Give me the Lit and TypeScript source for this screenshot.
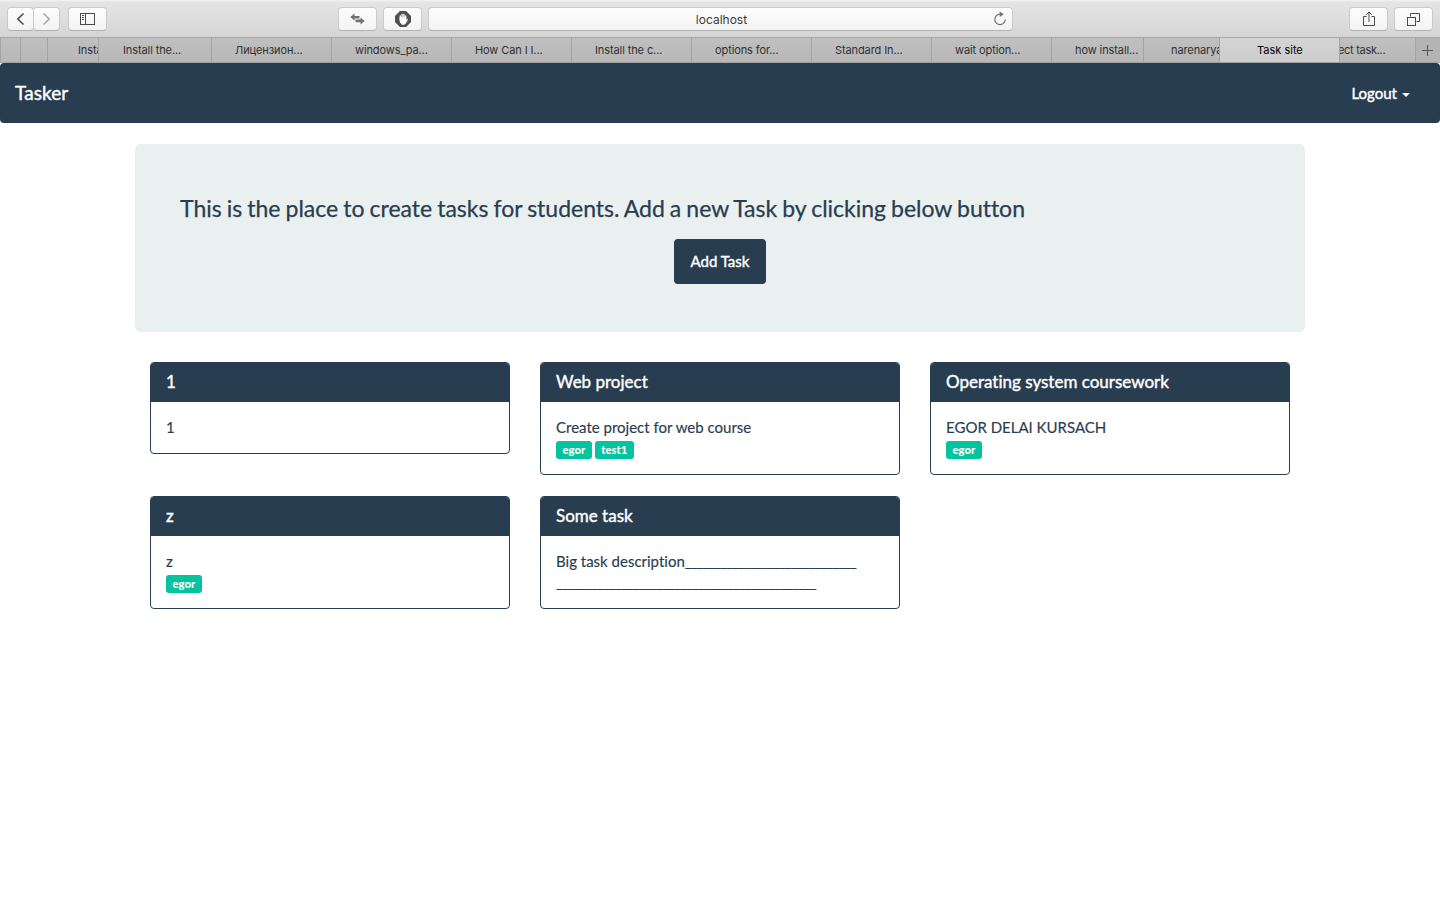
import { LitElement, html, css, svg, nothing } from "lit";
import { customElement } from "lit/decorators.js";
import { classMap } from "lit/directives/class-map.js";
import { styleMap } from "lit/directives/style-map.js";

interface Tab { w: number; pad: number; text: string; active?: boolean; }
interface Task { title: string; text: string; blanks?: number[]; users: string[]; }

const TABS: Tab[] = [
  { w: 21, pad: 0, text: "" },
  { w: 27, pad: 0, text: "" },
  { w: 51, pad: 30, text: "Insta" },
  { w: 113, pad: 24, text: "Install the..." },
  { w: 120, pad: 23, text: "Лицензион..." },
  { w: 120, pad: 23, text: "windows_pa..." },
  { w: 120, pad: 23, text: "How Can I I..." },
  { w: 120, pad: 23, text: "Install the c..." },
  { w: 120, pad: 23, text: "options for..." },
  { w: 120, pad: 23, text: "Standard In..." },
  { w: 120, pad: 23, text: "wait option..." },
  { w: 92, pad: 23, text: "how install..." },
  { w: 76, pad: 27, text: "narenarya" },
  { w: 120, pad: 37, text: "Task site", active: true },
  { w: 76, pad: 0, text: "ect task..." },
];

const TASKS: Task[] = [
  { title: "1", text: "1", users: [] },
  { title: "Web project", text: "Create project for web course", users: ["egor", "test1"] },
  { title: "Operating system coursework", text: "EGOR DELAI KURSACH", users: ["egor"] },
  { title: "z", text: "z", users: ["egor"] },
  { title: "Some task", text: "Big task description", blanks: [29, 44], users: [] },
];

@customElement("safari-chrome")
class SafariChrome extends LitElement {
  static styles = css`
    :host { display: block; font-family: Inter, "Liberation Sans", sans-serif; }
    .toolbar {
      box-sizing: border-box; height: 37px; padding: 7px 7px 0; display: flex;
      background: linear-gradient(#f4f4f4 0, #e5e5e5 2px, #d5d5d5 100%);
    }
    .btn, .address {
      box-sizing: border-box; height: 24px; border: 1px solid #cbcbcb; border-bottom-color: #b2b2b2;
      border-radius: 4px; background: linear-gradient(#fdfdfd, #f3f3f3);
      display: flex; align-items: center; justify-content: center; color: #4c4c4c;
    }
    .btn { width: 39px; }
    .nav { width: 27px; }
    .fwd { margin-left: -1px; color: #a9a9a9; }
    .side { margin-left: 8px; }
    .swap { margin-left: 231px; color: #727272; }
    .stop { margin-left: 6px; }
    .address {
      width: 585px; margin-left: 6px; padding: 2px 0 0 2px; font-size: 12px; color: #3c3c3c; position: relative;
    }
    .reload { position: absolute; right: 5px; top: 3px; color: #717171; }
    .share { margin-left: auto; }
    .all { margin-left: 6px; }
    svg { display: block; }
    .tabs {
      box-sizing: border-box; height: 26px; display: flex; border-top: 1px solid #a6a6a6;
      border-bottom: 1px solid #a3a3a3; background: linear-gradient(#c0c0c0, #b7b7b7);
      font-size: 11px; line-height: 24px; letter-spacing: -0.1px; color: #303030;
    }
    .tab {
      box-sizing: border-box; flex: none; overflow: hidden; white-space: nowrap;
      border-right: 1px solid #a4a4a4;
    }
    .tab.active { background: linear-gradient(#d4d4d4, #cdcdcd); color: #000; letter-spacing: 0; }
    .tab:first-child { border-left: 1px solid #a4a4a4; }
    .tab:nth-child(15) { letter-spacing: -0.3px; text-indent: -2px; }
    .add { flex: 1; display: flex; align-items: center; justify-content: center; padding-right: 2px; color: #555; background: #b4b4b4; }
  `;

  render() {
    const icon = (w: number, h: number, body: unknown) =>
      html`<svg width=${w} height=${h} viewBox="0 0 ${w} ${h}" fill="none" stroke="currentColor">${body}</svg>`;
    return html`
      <div class="toolbar">
        <div class="btn nav">${icon(9, 14, svg`<path d="M7.5 1.5 1.8 7l5.7 5.5" stroke-width="1.6"/>`)}</div>
        <div class="btn nav fwd">${icon(9, 14, svg`<path d="M1.5 1.5 7.2 7 1.5 12.5" stroke-width="1.6"/>`)}</div>
        <div class="btn side">${icon(15, 12, svg`<rect x=".5" y=".5" width="14" height="11"/><path d="M5.5 .5v11M2 2.5h2M2 4.5h2M2 6.5h2"/>`)}</div>
        <div class="btn swap">${icon(15, 12, svg`<path d="M.3 4.1 4.5 .5v2.4h5v2.6h-5v2.2ZM14.7 8 10.5 4.4v2.2h-5v2.6h5v2.4Z" fill="currentColor" stroke="none"/>`)}</div>
        <div class="btn stop">${icon(16, 16, svg`<path d="M4.9 0h6.2L16 4.9v6.2L11.1 16H4.9L0 11.1V4.9Z" fill="#505050" stroke="none"/><path d="M5.3 9V5M7.1 8V3.4M8.9 8V3.4M10.6 9V5" stroke="#eee" stroke-width="1.5" stroke-linecap="round"/><path d="M4.6 6.5h6.7v2.7l1.2-1.3.6.6-2.4 4-1.4 1.2H6.9L4.8 11Z" fill="#fff" stroke="none"/>`)}</div>
        <div class="address">localhost
          <span class="reload">${icon(14, 16, svg`<path d="M12.2 8.4A5.2 5.2 0 1 1 7 3.2" stroke-width="1.2"/><path d="M6.7 .4 10.8 3.2 6.7 6Z" fill="currentColor" stroke="none"/>`)}</span>
        </div>
        <div class="btn share">${icon(12, 16, svg`<path d="M3.5 5.5h-3v9h11v-9h-3M6 11V1M3.2 3.7 6 1l2.8 2.7"/>`)}</div>
        <div class="btn all">${icon(13, 13, svg`<rect x=".5" y="4.5" width="8" height="8"/><path d="M3.5 3.5v-3h9v8h-3"/>`)}</div>
      </div>
      <div class="tabs">
        ${TABS.map((t) => html`<div class=${classMap({ tab: true, active: !!t.active })}
          style=${styleMap({ width: `${t.w}px`, paddingLeft: `${t.pad}px` })}>${t.text}</div>`)}
        <div class="add">${icon(11, 11, svg`<path d="M5.5 0v11M0 5.5h11"/>`)}</div>
      </div>`;
  }
}

@customElement("task-card")
class TaskCard extends LitElement {
  static properties = { task: { attribute: false } };
  declare task: Task;
  static styles = css`
    :host { display: block; }
    .card { border: 1px solid #293d50; border-radius: 4px; background: #fff; overflow: hidden; }
    .title {
      margin: 0; padding: 9px 15px 11px; background: #293d50; color: #fff; font-size: 17px;
      line-height: 19px; font-weight: 400; -webkit-text-stroke: 0.4px #fff;
    }
    .body { padding: 15px 15px 14.6px; -webkit-text-stroke: 0.15px currentColor; }
    .blank { letter-spacing: -0.985px; }
    .users { display: flex; gap: 3px; height: 20.9px; align-items: flex-start; }
    .label {
      margin-top: 2.6px; height: 18px; box-sizing: border-box; padding: 3px 6.6px 0; border-radius: 3px;
      background: #06c3a0; color: #fff; font-size: 11.25px; line-height: 12px; font-weight: 900;
      -webkit-text-stroke: 0;
    }
    .label + .label { padding: 3px 6.5px 0; }
  `;
  render() {
    const t = this.task;
    return html`<div class="card">
      <h3 class="title">${t.title}</h3>
      <div class="body">
        <div>${t.text}${t.blanks?.map((n) => html`<span class="blank">${"_".repeat(n)}</span><wbr>`)}</div>
        ${t.users.length ? html`<div class="users">${t.users.map((u) => html`<span class="label">${u}</span>`)}</div>` : nothing}
      </div>
    </div>`;
  }
}

@customElement("app-root")
class AppRoot extends LitElement {
  static styles = css`
    :host {
      display: block; height: 900px; overflow: hidden; background: #fff; color: #293d50;
      font: 15px/1.42857 Lato, sans-serif; font-variant-ligatures: none;
    }
    .navbar {
      height: 60px; box-sizing: border-box; padding: 0 30px 0 15px; border-radius: 4px;
      display: flex; justify-content: space-between; align-items: center;
      background: #293d50; color: #fff; -webkit-text-stroke: 0.4px #fff;
    }
    .brand { font-size: 19px; letter-spacing: 0.1px; }
    .logout { display: flex; align-items: center; gap: 5px; padding-top: 1px; }
    .caret { border: 4px solid transparent; border-top-color: #fff; border-bottom: 0; margin-top: 3px; }
    .container { width: 1170px; margin: 21px auto 0; }
    .jumbo { box-sizing: border-box; height: 188px; padding: 48px 45px; border-radius: 6px; background: #eaf0f0; }
    .lead {
      margin: 0 0 14px; font-size: 23px; line-height: 33px; letter-spacing: -0.01px; word-spacing: -0.8px;
      -webkit-text-stroke: 0.25px currentColor;
    }
    .action { display: flex; justify-content: center; }
    .add {
      width: 92px; height: 45px; padding: 0; border: 0; border-radius: 4px; background: #293d50;
      color: #fff; font: 400 15px/21px Lato, sans-serif; -webkit-text-stroke: 0.4px #fff;
    }
    .grid {
      display: grid; grid-template-columns: repeat(3, 360px); gap: 21px 30px;
      padding: 30px 15px 0; align-items: start;
    }
  `;
  render() {
    return html`
      <safari-chrome></safari-chrome>
      <nav class="navbar">
        <span class="brand">Tasker</span>
        <span class="logout">Logout <i class="caret"></i></span>
      </nav>
      <main class="container">
        <section class="jumbo">
          <p class="lead">This is the place to create tasks for students. Add a new Task by clicking below button</p>
          <div class="action"><button class="add">Add Task</button></div>
        </section>
        <section class="grid">${TASKS.map((t) => html`<task-card .task=${t}></task-card>`)}</section>
      </main>`;
  }
}
